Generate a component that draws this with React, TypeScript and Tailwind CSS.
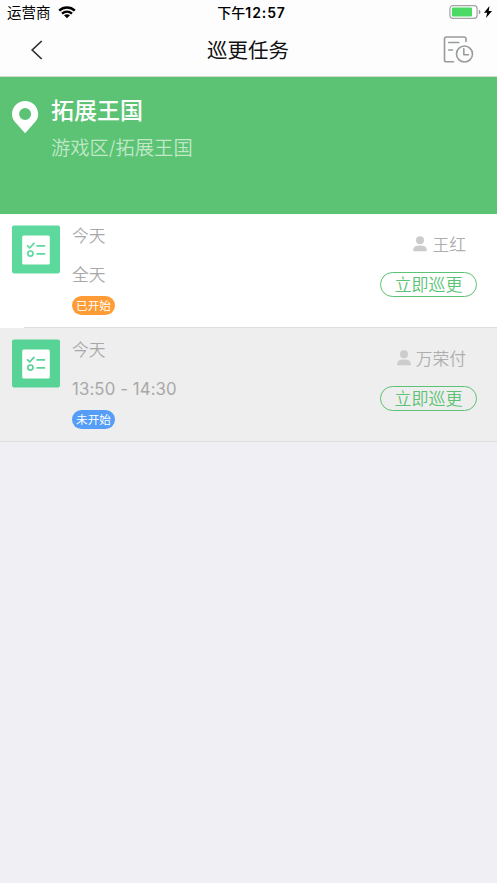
type Task = {
  time: string;
  status: string;
  started: boolean;
  person: string;
};

const tasks: Task[] = [
  { time: '全天', status: '已开始', started: true, person: '王红' },
  { time: '13:50 - 14:30', status: '未开始', started: false, person: '万荣付' },
];

function StatusBar() {
  return (
    <div className="flex h-6 items-center justify-between pl-[7px] pr-[5px] text-black">
      <div className="flex w-[180px] items-center gap-[7px]">
        <span className="pt-[2px] text-[14.5px] leading-6">运营商</span>
        <svg width="18" height="13" viewBox="0 0 18 13" fill="none" stroke="currentColor" strokeWidth="2.4">
          <path d="M1.2 4.7C5.7.5 12.3.5 16.8 4.7" />
          <path d="M4 7.7c2.9-2.6 7.1-2.6 10 0" />
          <path d="M6 9.3c1.8-1.4 4.2-1.4 6 0l-3 3z" fill="currentColor" stroke="none" />
        </svg>
      </div>
      <span className="ml-[4px] pt-px text-[14px] font-medium leading-6 tracking-[0.1px]">
        下午<span className="font-semibold tracking-[0.9px]">12:57</span>
      </span>
      <div className="flex w-[180px] items-center justify-end gap-[3px]">
        <svg width="32" height="14" viewBox="0 0 32 14">
          <rect x="0.9" y="0.7" width="27.2" height="12.6" rx="3" fill="#fff" stroke="#a3a3a3" strokeWidth="1.2" />
          <rect x="2.9" y="2.5" width="20.1" height="9" rx="1" fill="#4cd964" />
          <path d="M29.8 4.8q1.7.5 1.7 2.2t-1.7 2.2z" fill="#999" />
        </svg>
        <svg width="8" height="12" viewBox="0 0 8 12" fill="currentColor">
          <path d="M5.5 0 0 6.7h3.2L2 12l6-7H4.7z" />
        </svg>
      </div>
    </div>
  );
}

function NavBar() {
  return (
    <div className="flex h-[53px] items-center border-b border-[#d0dbd3] pl-[30px] pr-[23px]">
      <svg width="32" height="20" viewBox="0 0 32 20" fill="none" stroke="#303030" strokeWidth="1.7">
        <path d="M11.7 1 2.2 10l9.5 9" />
      </svg>
      <h1 className="ml-[145px] pt-[2px] text-[20.5px] leading-[30px] text-[#111]">巡更任务</h1>
      <svg className="ml-auto" width="31" height="28" viewBox="0 0 31 28" fill="none" stroke="#989c9b" strokeWidth="1.6" strokeLinecap="round" strokeLinejoin="round">
        <path d="M23 5.5V3Q23 1 21 1H3.5Q1.5 1 1.5 3V24Q1.5 25.8 3.5 25.8H10.5" />
        <path d="M5.7 6.5H15.8M5.7 14H9.5" />
        <circle cx="21.5" cy="18" r="8" />
        <path d="M20.8 12.8V18.8H25.5" />
      </svg>
    </div>
  );
}

function LocationHeader() {
  return (
    <section className="flex h-[137px] gap-3 bg-[#5bc373] pl-3 pt-[18px]">
      <svg className="mt-[6px]" width="27" height="33" viewBox="0 0 27 33">
        <path fillRule="evenodd" fill="#fff" d="M13.1 0C6 0 0 5.8 0 13.1c0 4.8 2.5 7.5 5.1 10.2l8 8.9 8-8.9c2.6-2.7 5.1-5.4 5.1-10.2C26.2 5.8 20.4 0 13.1 0Zm0 7.1a6 6 0 1 1 0 12 6 6 0 0 1 0-12Z" />
      </svg>
      <div>
        <h2 className="pt-px text-[23px] font-medium leading-[30px] text-white">拓展王国</h2>
        <p className="mt-[7px] text-[19.3px] font-[350] leading-[30px] text-[#c0e8c9]">游戏区/拓展王国</p>
      </div>
    </section>
  );
}

function TaskIcon({ started }: { started: boolean }) {
  const color = started ? '#5dd99d' : '#57d396';
  return (
    <svg className="shrink-0 overflow-visible" width="48" height="48" viewBox="0 0.6 48 48">
      <rect width="48" height="48" rx="1.8" fill={color} />
      <rect x="10.2" y="10" width="27.6" height="29" rx="1.5" fill="#fff" />
      <g fill="none" stroke={color} strokeWidth="1.7" strokeLinecap="round">
        <path d="m15.5 20.4 2.3 2 4.2-4.4M25.2 20.5H32.5M25.2 28.5H32.5" />
        <circle cx="18.4" cy="28.2" r="2.6" />
      </g>
    </svg>
  );
}

function TaskRow({ task }: { task: Task }) {
  return (
    <li className={`flex h-[114px] flex-col ${task.started ? 'bg-white' : 'bg-[#eeeeee]'}`}>
      <div className="flex flex-1 items-start pl-3 pr-5 pt-3">
        <TaskIcon started={task.started} />
        <div className="ml-3 text-[#a8a8a8]">
          <p className="-mt-[2px] text-[16.8px] font-[350] leading-6">今天</p>
          <p className={`mt-[15px] leading-6 ${task.started ? 'text-[16.8px] font-[350]' : 'font-["Inter"] text-[16.8px] tracking-[0.1px]'}`}>{task.time}</p>
          <span className={`mt-[9px] flex h-[19px] w-[43px] items-center justify-center rounded-full pt-[2px] text-[11.6px] font-normal leading-none text-white ${task.started ? 'bg-[#ff9c35]' : 'bg-[#559df7]'}`}>
            {task.status}
          </span>
        </div>
        <div className="ml-auto flex flex-col items-end">
          <div className="mr-[11px] mt-[6px] flex h-6 items-center gap-[5px] text-[16.8px] font-[350] leading-6 text-[#aeaeae]">
            <svg width="14" height="16" viewBox="0 0 14 16" fill="#cccccc">
              <circle cx="7" cy="4.2" r="4" />
              <path d="M0.2 15.2v-1.2q0-4.4 6.8-4.4t6.8 4.4v1.2z" />
            </svg>
            <span className="pt-[2px]">{task.person}</span>
          </div>
          <button className="mt-4 flex h-[25px] w-[97px] items-center justify-center rounded-full border border-[#5bc373] pt-[2px] text-[17px] font-[350] leading-none text-[#5bc373]">
            立即巡更
          </button>
        </div>
      </div>
      <div className={`h-px shrink-0 bg-[#dddddf] ${task.started ? 'ml-6' : ''}`} />
    </li>
  );
}

export default function App() {
  return (
    <div className="h-[883px] w-[497px] overflow-hidden bg-[#efeff4] font-['Inter','Noto_Sans_CJK_SC',sans-serif]">
      <header className="bg-[#fdfdfd]">
        <StatusBar />
        <NavBar />
      </header>
      <LocationHeader />
      <ul>
        {tasks.map((task) => (
          <TaskRow key={task.time} task={task} />
        ))}
      </ul>
    </div>
  );
}
